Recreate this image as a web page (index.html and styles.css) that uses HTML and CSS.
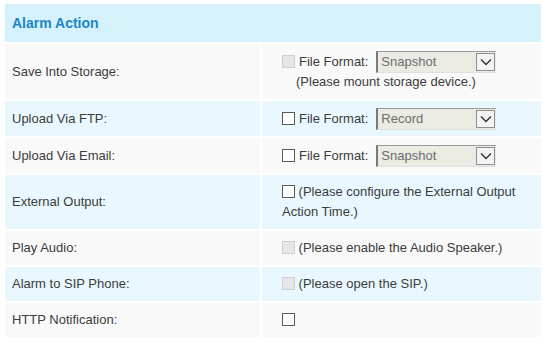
FILE: index.html
```html
<!DOCTYPE html>
<html lang="en">
<head>
  <meta charset="UTF-8">
  <meta name="viewport" content="width=device-width, initial-scale=1.0">
  <title>Alarm Action</title>
  <link rel="stylesheet" href="styles.css">
</head>
<body>
  <table class="action-table">
    <tr>
      <th colspan="2" class="title">Alarm Action</th>
    </tr>
    <tr class="odd">
      <td class="label">Save Into Storage:</td>
      <td class="value">
        <div class="line">
          <input type="checkbox" disabled>
          <span>File Format:</span>
          <div class="select"><span class="select-text">Snapshot</span><span class="select-arrow"><svg width="12" height="8" viewBox="0 0 12 8"><path d="M1 1.5 L6 6.5 L11 1.5" fill="none" stroke="#333" stroke-width="1.4"/></svg></span></div>
        </div>
        <div class="note">(Please mount storage device.)</div>
      </td>
    </tr>
    <tr class="even">
      <td class="label">Upload Via FTP:</td>
      <td class="value">
        <div class="line">
          <input type="checkbox">
          <span>File Format:</span>
          <div class="select"><span class="select-text">Record</span><span class="select-arrow"><svg width="12" height="8" viewBox="0 0 12 8"><path d="M1 1.5 L6 6.5 L11 1.5" fill="none" stroke="#333" stroke-width="1.4"/></svg></span></div>
        </div>
      </td>
    </tr>
    <tr class="odd">
      <td class="label">Upload Via Email:</td>
      <td class="value">
        <div class="line">
          <input type="checkbox">
          <span>File Format:</span>
          <div class="select"><span class="select-text">Snapshot</span><span class="select-arrow"><svg width="12" height="8" viewBox="0 0 12 8"><path d="M1 1.5 L6 6.5 L11 1.5" fill="none" stroke="#333" stroke-width="1.4"/></svg></span></div>
        </div>
      </td>
    </tr>
    <tr class="even">
      <td class="label">External Output:</td>
      <td class="value"><input type="checkbox"> (Please configure the External Output Action Time.)</td>
    </tr>
    <tr class="odd">
      <td class="label">Play Audio:</td>
      <td class="value"><input type="checkbox" disabled> (Please enable the Audio Speaker.)</td>
    </tr>
    <tr class="even">
      <td class="label">Alarm to SIP Phone:</td>
      <td class="value"><input type="checkbox" disabled> (Please open the SIP.)</td>
    </tr>
    <tr class="odd">
      <td class="label">HTTP Notification:</td>
      <td class="value"><input type="checkbox"></td>
    </tr>
  </table>
</body>
</html>
```

FILE: styles.css
```css
body {
  font-family: 'Liberation Sans', Arial, sans-serif;
  font-size: 13px;
  color: #3c3c3c;
  background: #fff;
  margin: 0;
  padding: 2px 3px;
}
.action-table {
  width: 540px;
  border-spacing: 2px;
}
.title {
  background: #d5f1fc;
  color: #1a87c9;
  font-size: 14px;
  font-weight: bold;
  text-align: left;
  height: 38px;
  padding: 0 7px;
}
.odd td {
  background: #f9f9f9;
}
.even td {
  background: #e8f8fe;
}
td {
  line-height: 20px;
  vertical-align: middle;
}
.label {
  width: 241px;
  padding: 7px 7px;
}
.value {
  padding: 7px 10px 7px 20px;
}
.line {
  display: flex;
  align-items: center;
  height: 21px;
}
.line span {
  margin-right: 8px;
}
.note {
  padding-left: 14px;
}
input[type="checkbox"] {
  appearance: none;
  width: 13px;
  height: 13px;
  margin: 0;
  border: 1px solid #5a5a5a;
  background: #fff;
  vertical-align: -2px;
}
input[type="checkbox"]:disabled {
  border-color: #cfcfcf;
  background: #e6e6e6;
}
.line input[type="checkbox"] {
  margin-right: 4px;
}
.select {
  display: flex;
  align-items: center;
  justify-content: space-between;
  width: 120px;
  height: 22px;
  box-sizing: border-box;
  background: #ebebe4;
  border-left: 2px solid #7a7a7a;
  border-top: 1px solid #9a9a9a;
  border-bottom: 1px solid #e0e0e0;
  padding: 0 1px 0 3px;
}
.select .select-text {
  color: #6d6d6d;
  margin: 0;
}
.select .select-arrow {
  display: flex;
  align-items: center;
  justify-content: center;
  width: 19px;
  height: 18px;
  margin: 0;
  box-sizing: border-box;
  border: 1px solid #8f8f8f;
  background: #f4f4f4;
}
```
